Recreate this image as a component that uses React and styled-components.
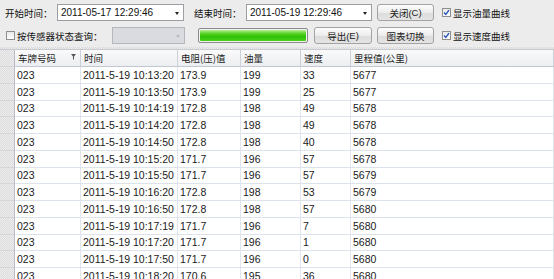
import React from "react";
import styled, { createGlobalStyle } from "styled-components";

const Global = createGlobalStyle`
  html, body { margin: 0; padding: 0; background: #ececec; }
  body { font-family: "Liberation Sans", "Noto Sans CJK SC", sans-serif; }
  * { box-sizing: border-box; }
`;

const Page = styled.div`
  width: 554px;
  height: 279px;
  overflow: hidden;
  background: #ececec;
  display: flex;
  flex-direction: column;
`;

const Toolbar = styled.div`
  height: 47px;
  padding-top: 4px;
  display: flex;
  flex-direction: column;
  gap: 6px;
`;

const ToolRow = styled.div`
  height: 17px;
  display: flex;
  align-items: center;
`;

const Label = styled.span`
  font-family: "Noto Sans CJK SC", sans-serif;
  font-size: 9.5px;
  color: #111;
  width: ${(p) => p.$w}px;
  margin-left: ${(p) => p.$ml || 0}px;
  white-space: nowrap;
`;

const Combo = styled.div`
  width: ${(p) => p.$w}px;
  margin-left: ${(p) => p.$ml || 0}px;
  height: 17px;
  border: 1px solid ${(p) => (p.$disabled ? "#b4b7bd" : "#9c9ea3")};
  background: ${(p) => (p.$disabled ? "#d9dbe1" : "#fff")};
  display: flex;
  align-items: center;
  padding-left: 3px;
  font-size: 10px;
  color: #111;
  position: relative;
`;

const Arrow = styled.span`
  position: absolute;
  right: 4px;
  top: 7px;
  width: 0;
  height: 0;
  border-left: 2.5px solid transparent;
  border-right: 2.5px solid transparent;
  border-top: 3px solid ${(p) => (p.$disabled ? "#b8bbc2" : "#222")};
`;

const Button = styled.div`
  width: ${(p) => p.$w}px;
  margin-left: ${(p) => p.$ml || 0}px;
  height: 17px;
  border: 1px solid #a3a3a3;
  border-radius: 3px;
  background: linear-gradient(#fdfdfd, #ececec 50%, #dcdcdc 51%, #e4e4e4);
  display: flex;
  align-items: center;
  justify-content: center;
  font-family: "Liberation Sans", "Noto Sans CJK SC", sans-serif;
  font-size: 9.5px;
  color: #222;
  u { text-decoration: none; }
`;

const Box = styled.span`
  width: 9px;
  height: 9px;
  margin-left: ${(p) => p.$ml || 0}px;
  margin-right: 2px;
  border: 1px solid #8f8f8f;
  background: linear-gradient(#e9e9e9, #fff);
  display: inline-flex;
  align-items: center;
  justify-content: center;
  flex: none;
`;

const Check = ({ on, ml }) => (
  <Box $ml={ml}>
    {on && (
      <svg width="7" height="7" viewBox="0 0 7 7">
        <path d="M1 3.5 L2.8 5.5 L6 1.2" fill="none" stroke="#2b56b8" strokeWidth="1.4" />
      </svg>
    )}
  </Box>
);

const Progress = styled.div`
  width: 110px;
  margin-left: ${(p) => p.$ml || 0}px;
  height: 15px;
  border: 1px solid #8a8a8a;
  border-radius: 2px;
  padding: 1px;
  background: #f2f2f2;
`;

const ProgressFill = styled.div`
  height: 100%;
  border-radius: 1px;
  background: linear-gradient(#b6ef94, #52d122 35%, #2fc208 60%, #48d11a);
`;

const Band = styled.div`
  height: 3px;
  background: repeating-conic-gradient(#dadada 0 25%, #ececec 0 50%) 0 0 / 2px 2px;
  border-bottom: 1px solid #c7cad0;
`;

const Grid = styled.div`
  display: grid;
  grid-template-columns: 15px 66px 97px 63px 60px 50px 1fr;
  grid-template-rows: 17px;
  grid-auto-rows: 16.75px;
  background: #fff;
  flex: 1;
  overflow: hidden;
  align-content: start;
`;

const HeadCell = styled.div`
  background: linear-gradient(#fafafa, #eceef1);
  border-right: 1px solid #cdd1d8;
  border-bottom: 1px solid #c3c8d0;
  font-family: "Noto Sans CJK SC", sans-serif;
  font-size: 9.5px;
  color: #222;
  display: flex;
  align-items: center;
  padding-left: 3px;
  position: relative;
`;

const Gutter = styled.div`
  background: repeating-conic-gradient(#dcdcdc 0 25%, #ededed 0 50%) 0 0 / 2px 2px;
  border-right: 1px solid #b9bcc2;
  border-bottom: 1px solid #d4d6da;
`;

const Cell = styled.div`
  border-right: 1px solid #e1e6ee;
  border-bottom: 1px solid #dde3ec;
  font-size: 10.5px;
  color: #1a1a1a;
  display: flex;
  align-items: center;
  padding-left: 2px;
  white-space: nowrap;
  overflow: hidden;
`;

const Funnel = styled.svg`
  position: absolute;
  right: 4px;
  top: 4px;
`;

const rows = [
  ["10:13:20", "173.9", "199", "33", "5677"],
  ["10:13:50", "173.9", "199", "25", "5677"],
  ["10:14:19", "172.8", "198", "49", "5678"],
  ["10:14:20", "172.8", "198", "49", "5678"],
  ["10:14:50", "172.8", "198", "40", "5678"],
  ["10:15:20", "171.7", "196", "57", "5678"],
  ["10:15:50", "171.7", "196", "57", "5679"],
  ["10:16:20", "172.8", "198", "53", "5679"],
  ["10:16:50", "172.8", "198", "57", "5680"],
  ["10:17:19", "171.7", "196", "7", "5680"],
  ["10:17:20", "171.7", "196", "1", "5680"],
  ["10:17:50", "171.7", "196", "0", "5680"],
  ["10:18:20", "170.6", "195", "36", "5680"],
];

export default function App() {
  return (
    <Page>
      <Global />
      <Toolbar>
        <ToolRow>
          <Label $w={52} $ml={5}>开始时间：</Label>
          <Combo $w={127}>
            2011-05-17 12:29:46
            <Arrow />
          </Combo>
          <Label $w={52} $ml={10}>结束时间：</Label>
          <Combo $w={126}>
            2011-05-19 12:29:46
            <Arrow />
          </Combo>
          <Button $w={57} $ml={5}>关闭(<u>C</u>)</Button>
          <Check on ml={8} />
          <Label>显示油量曲线</Label>
        </ToolRow>
        <ToolRow>
          <Check ml={6} />
          <Label $w={95}>按传感器状态查询：</Label>
          <Combo $w={73} $disabled>
            <Arrow $disabled />
          </Combo>
          <Progress $ml={13}>
            <ProgressFill />
          </Progress>
          <Button $w={58} $ml={6}>导出(<u>E</u>)</Button>
          <Button $w={57} $ml={5}>图表切换</Button>
          <Check on ml={8} />
          <Label>显示速度曲线</Label>
        </ToolRow>
      </Toolbar>
      <Band />
      <Grid>
        <Gutter />
        <HeadCell>
          车牌号码
          <Funnel width="5" height="6" viewBox="0 0 5 6">
            <path d="M0 0 H5 L3 2.5 V6 L2 5 V2.5 Z" fill="#555" />
          </Funnel>
        </HeadCell>
        <HeadCell>时间</HeadCell>
        <HeadCell>电阻(压)值</HeadCell>
        <HeadCell>油量</HeadCell>
        <HeadCell>速度</HeadCell>
        <HeadCell>里程值(公里)</HeadCell>
        {rows.map((r, i) => (
          <React.Fragment key={i}>
            <Gutter />
            <Cell>023</Cell>
            <Cell>2011-5-19 {r[0]}</Cell>
            <Cell>{r[1]}</Cell>
            <Cell>{r[2]}</Cell>
            <Cell>{r[3]}</Cell>
            <Cell>{r[4]}</Cell>
          </React.Fragment>
        ))}
      </Grid>
    </Page>
  );
}
